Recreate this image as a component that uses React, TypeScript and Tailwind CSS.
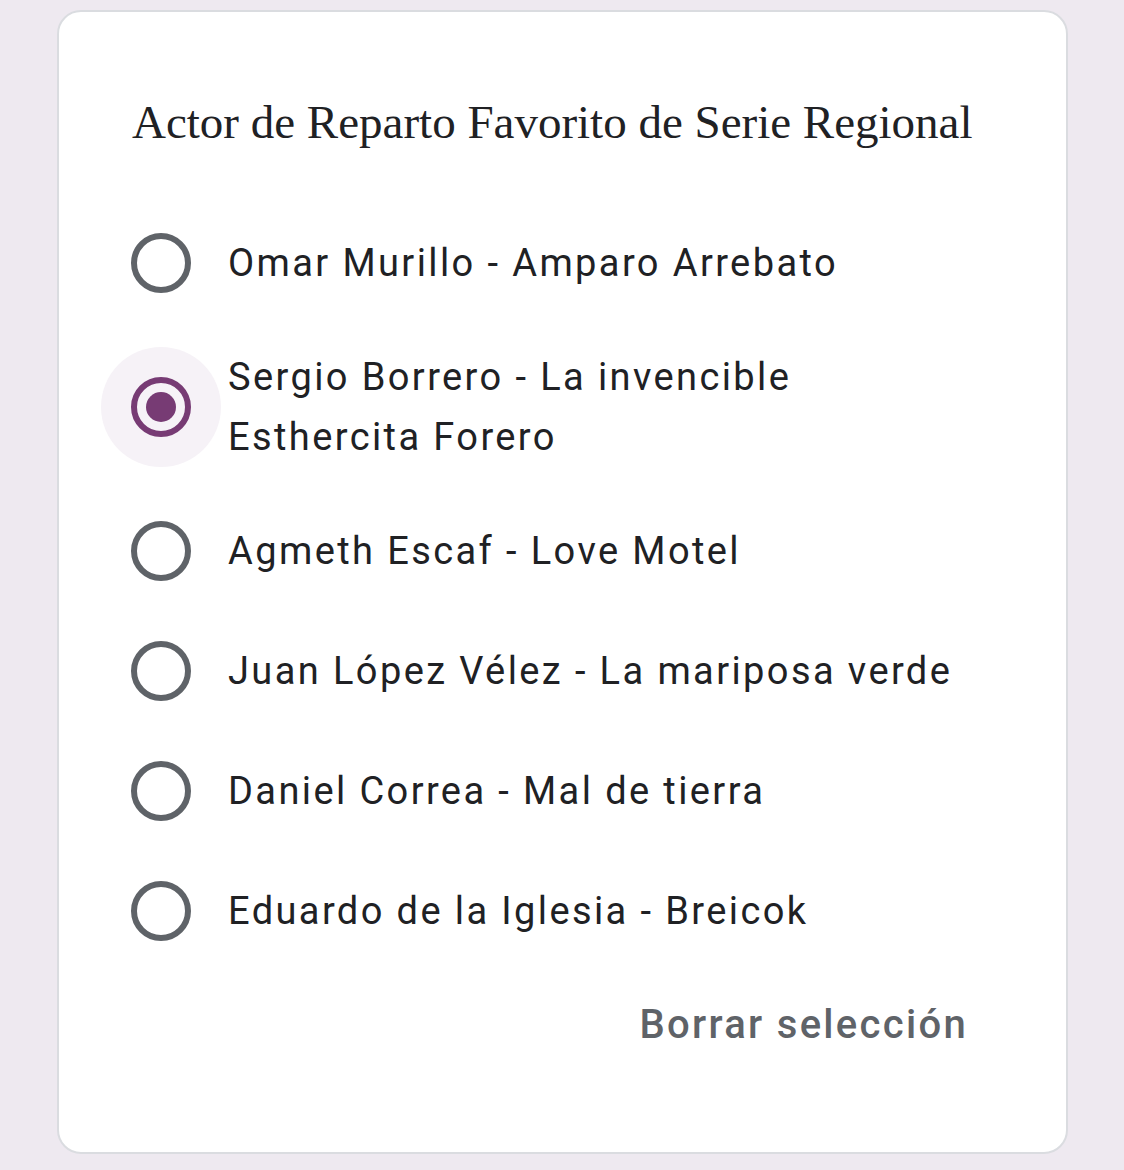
import React from "react";

const options = [
  { label: "Omar Murillo - Amparo Arrebato", h: "h-[120px]" },
  { label: "Sergio Borrero - La invencible\nEsthercita Forero", h: "h-[168px]", selected: true },
  { label: "Agmeth Escaf - Love Motel", h: "h-[120px]" },
  { label: "Juan López Vélez - La mariposa verde", h: "h-[120px]" },
  { label: "Daniel Correa - Mal de tierra", h: "h-[120px]" },
  { label: "Eduardo de la Iglesia - Breicok", h: "h-[120px]" },
];

function Radio({ selected }: { selected?: boolean }) {
  return (
    <div className="relative w-[60px] h-[60px] shrink-0 flex items-center justify-center">
      {selected && (
        <div className="absolute left-[-30px] top-[-30px] w-[120px] h-[120px] rounded-full bg-[#f6f2f7]" />
      )}
      <div
        className={
          "relative w-[60px] h-[60px] rounded-full border-[6px] flex items-center justify-center " +
          (selected ? "border-[#773b74]" : "border-[#5f6368]")
        }
      >
        {selected && <div className="w-[30px] h-[30px] rounded-full bg-[#773b74]" />}
      </div>
    </div>
  );
}

export default function App() {
  return (
    <div className="w-[1124px] h-[1170px] bg-[#eee9f0] pt-[10px] pl-[57px] overflow-hidden">
      <div className="w-[1011px] h-[1144px] bg-white border-2 border-[#dadce0] rounded-[24px] relative">
        <div
          className="absolute left-[73px] top-[80px] text-[#202124] text-[47px] leading-[60px] whitespace-nowrap"
          style={{ fontFamily: '"Liberation Serif", serif' }}
        >
          Actor de Reparto Favorito de Serie Regional
        </div>
        <div className="pt-[191px] pl-[72px] flex flex-col">
          {options.map((o, i) => (
            <div key={i} className={"flex items-center " + o.h}>
              <Radio selected={o.selected} />
              <div
                className="ml-[37px] text-[38px] leading-[60px] tracking-[2.4px] text-[#202124] whitespace-pre"
                style={{ fontFamily: "Roboto, sans-serif" }}
              >
                {o.label}
              </div>
            </div>
          ))}
        </div>
        <div
          className="absolute right-[98px] top-[983px] text-[40px] leading-[60px] tracking-[2.3px] font-medium text-[#5f6368]"
          style={{ fontFamily: "Roboto, sans-serif" }}
        >
          Borrar selección
        </div>
      </div>
    </div>
  );
}
